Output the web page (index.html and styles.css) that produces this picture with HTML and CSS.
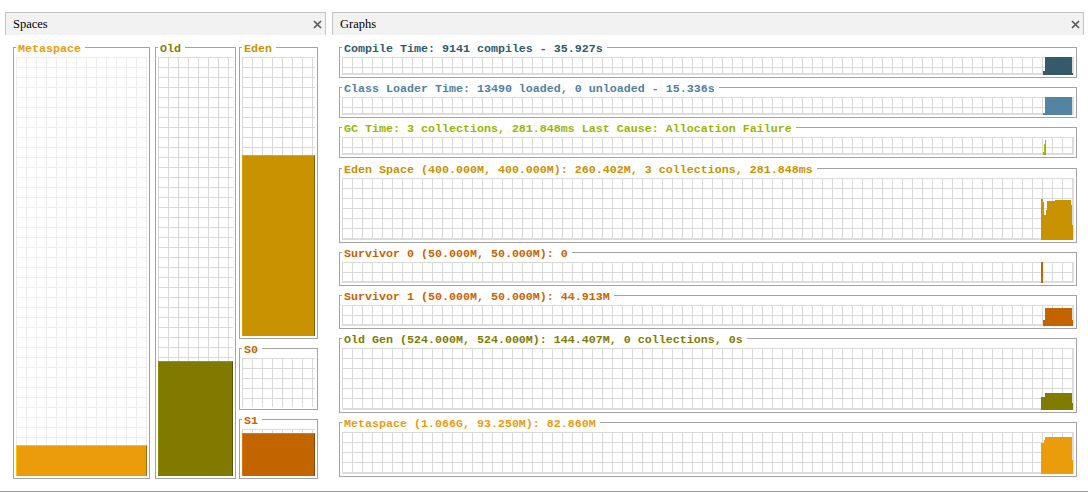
FILE: index.html
```html
<!DOCTYPE html>
<html>
<head>
<meta charset="utf-8">
<title>Visual GC</title>
<link rel="stylesheet" href="styles.css">
</head>
<body>
<div class="app">
  <div class="panels">
    <section class="panel panel-spaces">
      <div class="panel-header">
        <span class="panel-title">Spaces</span>
        <svg class="close" width="9" height="9" viewBox="0 0 9 9"><path d="M1 1L8 8M8 1L1 8" stroke="#5a5a5a" stroke-width="1.7" fill="none"/></svg>
      </div>
      <div class="spaces-body">
        <div class="box col-meta">
          <div class="legend c-meta"><span>Metaspace</span></div>
          <div class="plot plot-space grid-light h-419">
            <div class="bar bar-meta" style="height:31px"></div>
          </div>
        </div>
        <div class="box col-old">
          <div class="legend c-old"><span>Old</span></div>
          <div class="plot plot-space grid h-419">
            <div class="bar bar-old" style="height:115px"></div>
          </div>
        </div>
        <div class="col-young">
          <div class="box">
            <div class="legend c-eden"><span>Eden</span></div>
            <div class="plot plot-space grid h-279">
              <div class="bar bar-eden" style="height:181px"></div>
            </div>
          </div>
          <div class="box">
            <div class="legend c-surv"><span>S0</span></div>
            <div class="plot plot-space grid h-49"></div>
          </div>
          <div class="box">
            <div class="legend c-surv"><span>S1</span></div>
            <div class="plot plot-space grid h-47">
              <div class="bar bar-surv" style="height:43px"></div>
            </div>
          </div>
        </div>
      </div>
    </section>

    <section class="panel panel-graphs">
      <div class="panel-header">
        <span class="panel-title">Graphs</span>
        <svg class="close" width="9" height="9" viewBox="0 0 9 9"><path d="M1 1L8 8M8 1L1 8" stroke="#5a5a5a" stroke-width="1.7" fill="none"/></svg>
      </div>
      <div class="graphs-body">
        <div class="box">
          <div class="legend c-compile"><span>Compile Time: 9141 compiles - 35.927s</span></div>
          <div class="plot plot-graph grid h-18">
            <svg width="34" height="18" viewBox="0 0 34 18" shape-rendering="crispEdges"><polygon fill="#345a6c" points="3,18 3,14 5,14 5,0 32,0 32,16 33,16 33,18"/></svg>
          </div>
        </div>
        <div class="box">
          <div class="legend c-class"><span>Class Loader Time: 13490 loaded, 0 unloaded - 15.336s</span></div>
          <div class="plot plot-graph grid h-18">
            <svg width="34" height="18" viewBox="0 0 34 18" shape-rendering="crispEdges"><polygon fill="#5384a2" points="3,18 3,16 5,16 5,0 32,0 32,18"/></svg>
          </div>
        </div>
        <div class="box box-gc">
          <div class="legend c-gc"><span>GC Time: 3 collections, 281.848ms Last Cause: Allocation Failure</span></div>
          <div class="plot plot-graph grid h-18">
            <svg width="34" height="18" viewBox="0 0 34 18" shape-rendering="crispEdges"><polygon fill="#9cb800" points="3,18 3,15 4,15 4,7 5,7 5,3 6,3 6,18"/></svg>
          </div>
        </div>
        <div class="box">
          <div class="legend c-eden"><span>Eden Space (400.000M, 400.000M): 260.402M, 3 collections, 281.848ms</span></div>
          <div class="plot plot-graph grid h-62">
            <svg width="34" height="62" viewBox="0 0 34 62" shape-rendering="crispEdges"><polygon fill="#c89200" points="1,62 1,21 3,21 3,24 4,24 4,37 6,37 6,32 7,32 7,23 15,23 15,22 31,22 31,27 32,27 32,47 33,47 33,62"/></svg>
          </div>
        </div>
        <div class="box">
          <div class="legend c-surv"><span>Survivor 0 (50.000M, 50.000M): 0</span></div>
          <div class="plot plot-graph grid h-21">
            <svg width="34" height="21" viewBox="0 0 34 21" shape-rendering="crispEdges"><polygon fill="#c36400" points="1,0 3,0 3,21 1,21"/></svg>
          </div>
        </div>
        <div class="box">
          <div class="legend c-surv"><span>Survivor 1 (50.000M, 50.000M): 44.913M</span></div>
          <div class="plot plot-graph grid h-21">
            <svg width="34" height="21" viewBox="0 0 34 21" shape-rendering="crispEdges"><polygon fill="#c36400" points="3,21 3,15 5,15 5,3 32,3 32,15 33,15 33,21"/></svg>
          </div>
        </div>
        <div class="box">
          <div class="legend c-old"><span>Old Gen (524.000M, 524.000M): 144.407M, 0 collections, 0s</span></div>
          <div class="plot plot-graph grid h-62">
            <svg width="34" height="62" viewBox="0 0 34 62" shape-rendering="crispEdges"><polygon fill="#807c00" points="1,62 1,49 5,49 5,45 32,45 32,55 33,55 33,62"/></svg>
          </div>
        </div>
        <div class="box">
          <div class="legend c-meta"><span>Metaspace (1.066G, 93.250M): 82.860M</span></div>
          <div class="plot plot-graph grid h-42">
            <svg width="34" height="42" viewBox="0 0 34 42" shape-rendering="crispEdges"><polygon fill="#eb9c0a" points="1,42 1,11 4,11 4,8 5,8 5,5 32,5 32,28 33,28 33,42"/></svg>
          </div>
        </div>
      </div>
    </section>
  </div>
  <div class="status"></div>
</div>
</body>
</html>
```

FILE: styles.css
```css
* { box-sizing: border-box; }
html, body { margin: 0; padding: 0; background: #fff; }
body {
  width: 1088px;
  height: 493px;
  overflow: hidden;
  font-family: "Liberation Mono", monospace;
}
.app { display: flex; flex-direction: column; height: 493px; }
.panels { display: flex; gap: 6px; padding: 12px 0 0 5px; height: 491px; }
.status { height: 2px; border-top: 1px solid #a0a0a0; }

.panel { display: flex; flex-direction: column; }
.panel-spaces { width: 321px; }
.panel-graphs { width: 752px; }
.panel-header {
  height: 23px;
  flex: none;
  background: #f2f2f2;
  border: 1px solid #c4c4c4;
  border-bottom: none;
  display: flex;
  align-items: center;
  justify-content: space-between;
  padding: 1px 3px 0 7px;
  font: 12.5px "Liberation Serif", serif;
  color: #000;
}
.close { display: block; }

.spaces-body { display: flex; padding: 12px 0 0 8px; }
.graphs-body { display: flex; flex-direction: column; gap: 9px; padding: 12px 7px 0 7px; }

.box { border: 1px solid #a3a3a3; padding: 0 2px 2px; background: #fff; }
.legend {
  height: 12px;
  margin-top: -5px;
  line-height: 12px;
  font-family: "Liberation Mono", monospace;
  font-weight: bold;
  font-size: 11.67px;
  white-space: nowrap;
}
.legend span { background: #fff; padding: 0 4px 0 2px; }
.plot { margin-top: 2px; }

.col-meta { width: 137px; }
.col-old { width: 81px; margin-left: 5px; }
.col-young { width: 79px; margin-left: 3px; display: flex; flex-direction: column; gap: 9px; }
.box-gc { margin-bottom: 1px; }

.grid {
  background-color: #fff;
  background-image:
    linear-gradient(to right, #d9d9d9 1px, transparent 1px),
    linear-gradient(to bottom, #d9d9d9 1px, transparent 1px);
  background-size: 10px 10px;
}
.grid-light {
  background-color: #fff;
  background-image:
    linear-gradient(to right, #ededed 1px, transparent 1px),
    linear-gradient(to bottom, #ededed 1px, transparent 1px);
  background-size: 10px 10px;
}

.plot-space { display: flex; flex-direction: column; justify-content: flex-end; }
.plot-graph { display: flex; justify-content: flex-end; align-items: flex-end; box-shadow: inset -2px -2px 0 #dcdcdc; }
.plot-graph svg { display: block; flex: none; }

.h-18 { height: 18px; }
.h-21 { height: 21px; }
.h-42 { height: 42px; }
.h-47 { height: 47px; }
.h-49 { height: 49px; }
.h-62 { height: 62px; }
.h-279 { height: 279px; }
.h-419 { height: 419px; }

.bar { flex: none; }
.bar-meta { background: #eb9c0a; border-top: 1px solid #f6c400; border-left: 1px solid #f6c400; border-right: 1px solid #a86c00; }
.bar-old { background: #807b00; border-top: 1px solid #9a9400; border-left: 1px solid #8c8800; border-right: 1px solid #5a5600; }
.bar-eden { background: #c89200; border-top: 1px solid #dca600; border-left: 1px solid #d8a000; border-right: 1px solid #8c6600; }
.bar-surv { background: #c26400; border-top: 1px solid #e47a00; border-left: 1px solid #e07400; border-right: 1px solid #8a4600; }

.c-meta { color: #eb9c0a; }
.c-old { color: #807c00; }
.c-eden { color: #c89200; }
.c-surv { color: #c66400; }
.c-compile { color: #2f5b6f; }
.c-class { color: #4f81a0; }
.c-gc { color: #9cb400; }
```
